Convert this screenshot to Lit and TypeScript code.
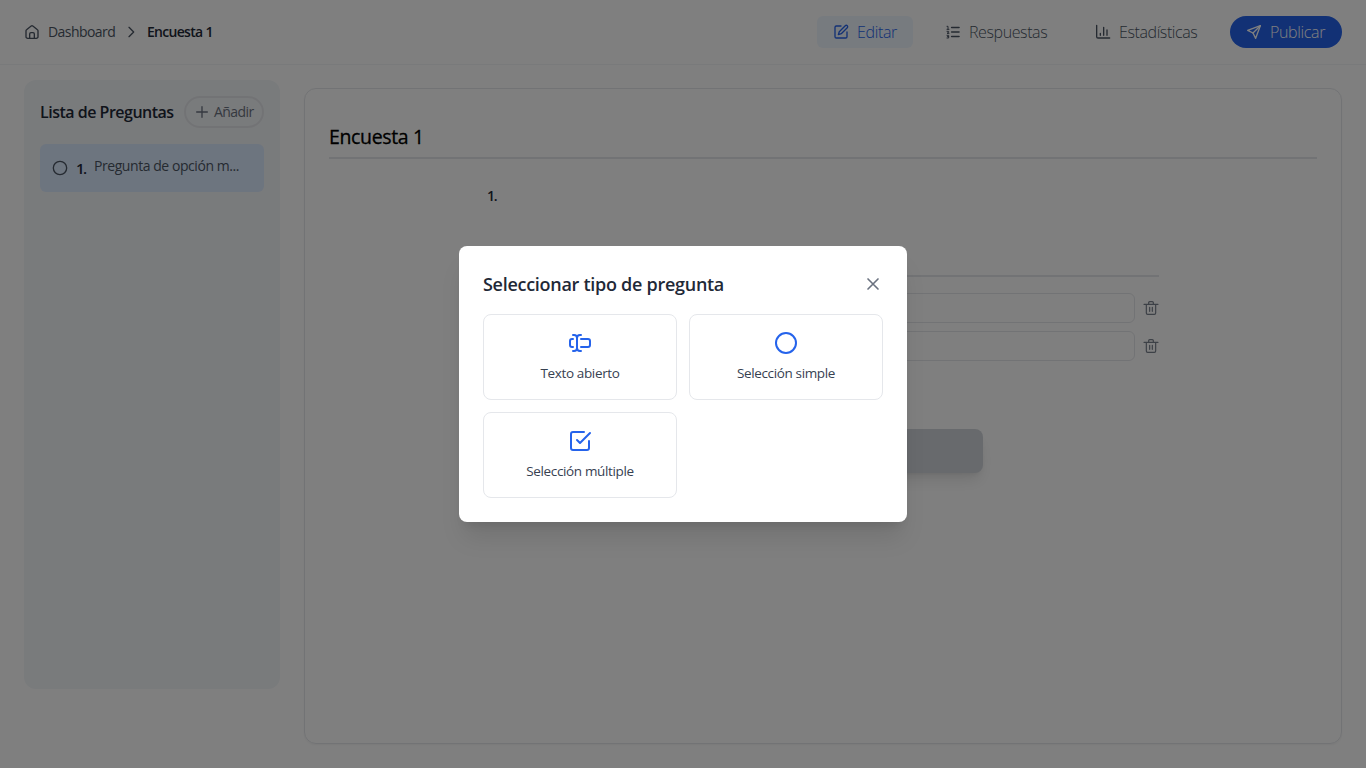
import { LitElement, html, css, svg } from "lit";
import { customElement } from "lit/decorators.js";

const icons = {
  home: svg`<path d="M3 10.2a2 2 0 0 1 .8-1.600l7-5.600a2 2 0 0 1 2.400 0l7 5.600a2 2 0 0 1 .8 1.600V19a2.500 2.500 0 0 1-2.500 2.500h-13A2.500 2.500 0 0 1 3 19z"/><path d="M8.500 21v-6a2 2 0 0 1 2-2h3a2 2 0 0 1 2 2v6"/>`,
  chevron: svg`<path d="m9 5 7 7-7 7"/>`,
  edit: svg`<path d="M12 3H5a2 2 0 0 0-2 2v14a2 2 0 0 0 2 2h14a2 2 0 0 0 2-2v-7"/><path d="M18.400 2.600a2.100 2.100 0 0 1 3 3L12.400 14.600 8 16l1.400-4.400z"/>`,
  list: svg`<path d="M10 5.250h11M10 12h11M10 18.750h11" stroke-width="2.500"/><path d="M3 3.500h1.500v4.500M3 8h3M3 11h2.500v1.500L3 14h3M3 17h2.500v4H3M3.500 19h2" stroke-width="1.500"/>`,
  chart: svg`<path d="M2.500 2v17a2 2 0 0 0 2 2H22"/><path d="M8 17v-3M13 17V5M18 17V9"/>`,
  send: svg`<path d="M21.500 2.500 2.500 9.500l8 4 4 8z"/><path d="m21.500 2.500-11 11"/>`,
  plus: svg`<path d="M12 4v16M4 12h16"/>`,
  circle: svg`<circle cx="12" cy="12" r="10"/>`,
  close: svg`<path d="M18 6 6 18M6 6l12 12"/>`,
  check: svg`<path d="m9 11 3 3L22 4"/><path d="M21 12v7a2 2 0 0 1-2 2H5a2 2 0 0 1-2-2V5a2 2 0 0 1 2-2h11"/>`,
  input: svg`<path d="M5 4h1a3 3 0 0 1 3 3 3 3 0 0 1 3-3h1M13 20h-1a3 3 0 0 1-3-3 3 3 0 0 1-3 3H5M5 16H4a2 2 0 0 1-2-2v-4a2 2 0 0 1 2-2h1M13 8h7a2 2 0 0 1 2 2v4a2 2 0 0 1-2 2h-7M9 7v10"/>`,
  trash: svg`<path d="M1.500 6.500h21M5 6.500v13a2 2 0 0 0 2 2h10a2 2 0 0 0 2-2v-13M8.500 6V4a1.500 1.500 0 0 1 1.500-1.500h4A1.500 1.500 0 0 1 15.500 4v2M10 11v6M14 11v6"/>`,
};
type IconName = keyof typeof icons;
const icon = (name: IconName, size = 16, w = 2) => html`<svg class="icon" width=${size} height=${size}
  viewBox="0 0 24 24" fill="none" stroke="currentColor" stroke-width=${w} stroke-linecap="round" stroke-linejoin="round">${icons[name]}</svg>`;

@customElement("app-root")
export class AppRoot extends LitElement {
  static styles = css`
    :host { display: block; height: 768px; position: relative; overflow: hidden; background: #fff; color: #1f2937;
      font-family: "Open Sans", "Noto Sans", sans-serif; font-size: 14px; line-height: 20px; }
    * { box-sizing: border-box; }
    .icon { display: block; flex: none; }
    span, h1, h2, h3 { white-space: nowrap; margin: 0; }
    .page { height: 768px; display: flex; flex-direction: column; }
    header { height: 65px; flex: none; border-bottom: 1px solid #f3f4f6; padding: 0 24px; display: flex; align-items: center; justify-content: space-between; }
    .crumbs { display: flex; align-items: center; color: #4b5563; }
    .crumbs .dash { width: 67px; margin-left: 8px; letter-spacing: -0.56px; }
    .crumbs .sep { margin: 0 8px; }
    .crumbs .here { color: #1f2937; font-weight: 600; letter-spacing: -0.7px; }
    nav { display: flex; gap: 16px; }
    .tab { height: 32px; display: flex; align-items: center; gap: 8px; padding: 0 16px; border-radius: 6px; font-size: 16px; font-weight: 300; color: #4b5563; letter-spacing: -0.4px; }
    .w-edit { width: 96px; background: #eff6ff; color: #2563eb; letter-spacing: -0.35px; }
    .w-resp { width: 134px; }
    .w-stat { width: 135px; }
    .w-pub { width: 112px; border-radius: 16px; background: #2563eb; color: #fff; letter-spacing: -0.35px; }
    main { flex: 1; display: flex; gap: 24px; padding: 15px 24px 24px; }
    aside { width: 256px; height: 609px; background: #f3f6f9; border-radius: 12px; padding: 16px; }
    .side-head { display: flex; align-items: center; justify-content: space-between; height: 32px; margin-bottom: 16px; }
    .side-head h2 { width: 134px; font-size: 16px; line-height: 24px; font-weight: 600; letter-spacing: -0.5px; }
    .add { width: 80px; height: 32px; border: 2px solid #e5e7eb; border-radius: 16px; display: flex; align-items: center; gap: 4px; padding: 0 8px; color: #6b7280; letter-spacing: -0.55px; }
    .item { height: 48px; background: #dbeafe; border-radius: 6px; display: flex; align-items: center; padding: 0 12px; color: #4b5563; }
    .item .num { margin-left: 8px; width: 18px; font-size: 15px; font-weight: 600; color: #1f2937; letter-spacing: -1.5px; }
    .item .name { align-self: flex-start; margin-top: 12px; letter-spacing: -0.44px; }
    .sheet { flex: 1; margin-top: 8px; border: 1px solid #e5e7eb; border-radius: 12px; padding: 32px 24px; box-shadow: 0 1px 2px rgba(0,0,0,.05); }
    .sheet h1 { height: 38px; border-bottom: 2px solid #e5e7eb; font-size: 19.5px; line-height: 31px; font-weight: 500; -webkit-text-stroke: 0.3px #000; letter-spacing: -0.35px; color: #000; }
    .form { width: 672px; margin: 0 auto; }
    .question { height: 118px; border-bottom: 2px solid #e5e7eb; padding-top: 27px; font-weight: 600; letter-spacing: -1.200px; }
    .answers { padding-top: 16px; display: grid; gap: 8px; }
    .answer { display: flex; align-items: center; gap: 8px; color: #7b828e; }
    .field { flex: 1; height: 30px; border: 1px solid #e5e7eb; border-radius: 6px; }
    .submit { width: 320px; height: 44px; margin: 68px auto 0; border-radius: 8px; background: #d1d5db; box-shadow: 0 10px 15px -3px rgba(0,0,0,.1), 0 4px 6px -4px rgba(0,0,0,.1); }
    .overlay { position: absolute; inset: 0; background: rgba(0,0,0,.5); display: flex; align-items: center; justify-content: center; }
    .modal { width: 448px; height: 276px; background: #fff; border-radius: 8px; padding: 24px; box-shadow: 0 20px 25px -5px rgba(0,0,0,.1), 0 8px 10px -6px rgba(0,0,0,.1); }
    .modal-head { height: 28px; margin-bottom: 16px; display: flex; align-items: center; justify-content: space-between; }
    .modal-head h3 { font-size: 18px; line-height: 28px; font-weight: 600; letter-spacing: -0.28px; }
    .close { color: #6b7280; }
    .grid { margin-top: 16px; display: grid; grid-template-columns: 1fr 1fr; gap: 12px; }
    .choice { height: 86px; border: 1px solid #e5e7eb; border-radius: 8px; display: flex; flex-direction: column; align-items: center; padding-top: 16px; gap: 8px; color: #2563eb; }
    .choice span { color: #374151; font-size: 13.5px; letter-spacing: -0.36px; }
  `;

  private choices: [IconName, string][] = [["input", "Texto abierto"], ["circle", "Selección simple"], ["check", "Selección múltiple"]];

  render() {
    return html`
      <div class="page">
        <header>
          <div class="crumbs">
            ${icon("home")}<span class="dash">Dashboard</span><div class="sep">${icon("chevron")}</div><span class="here">Encuesta 1</span>
          </div>
          <nav>
            <div class="tab w-edit">${icon("edit")}<span>Editar</span></div>
            <div class="tab w-resp">${icon("list")}<span>Respuestas</span></div>
            <div class="tab w-stat">${icon("chart")}<span>Estadísticas</span></div>
            <div class="tab w-pub">${icon("send")}<span>Publicar</span></div>
          </nav>
        </header>
        <main>
          <aside>
            <div class="side-head"><h2>Lista de Preguntas</h2><div class="add">${icon("plus")}<span>Añadir</span></div></div>
            <div class="item">${icon("circle")}<span class="num">1.</span><span class="name">Pregunta de opción m...</span></div>
          </aside>
          <section class="sheet">
            <h1>Encuesta 1</h1>
            <div class="form">
              <div class="question">1.</div>
              <div class="answers">
                ${[0, 1].map(() => html`<div class="answer"><div class="field"></div>${icon("trash", 16, 1.8)}</div>`)}
              </div>
              <div class="submit"></div>
            </div>
          </section>
        </main>
      </div>
      <div class="overlay">
        <div class="modal">
          <div class="modal-head"><h3>Seleccionar tipo de pregunta</h3><div class="close">${icon("close", 20)}</div></div>
          <div class="grid">${this.choices.map(([i, t]) => html`<div class="choice">${icon(i, 24)}<span>${t}</span></div>`)}</div>
        </div>
      </div>`;
  }
}
